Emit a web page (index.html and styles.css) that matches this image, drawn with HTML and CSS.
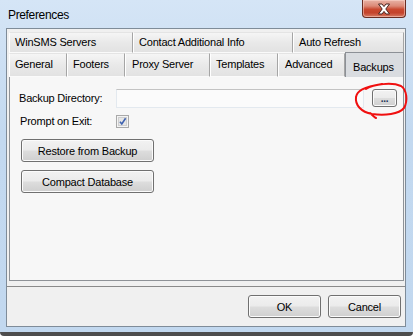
FILE: index.html
```html
<!DOCTYPE html>
<html>
<head>
<meta charset="utf-8">
<title>Preferences</title>
<link rel="stylesheet" href="styles.css">
</head>
<body>
<div class="window">
  <div class="titlebar">
    <span class="title">Preferences</span>
    <div class="close">
      <svg width="14" height="12" viewBox="0 0 14 12">
        <path d="M1.5 1 H5 L7 3.6 L9 1 H12.5 L8.8 6 L12.5 11 H9 L7 8.4 L5 11 H1.5 L5.2 6 Z" fill="#ffffff" stroke="#4a2520" stroke-width="1" stroke-linejoin="round"/>
      </svg>
    </div>
  </div>
  <div class="client">
    <div class="tabarea">
      <div class="tabrow row1">
        <div class="tab">WinSMS Servers</div>
        <div class="tab">Contact Additional Info</div>
        <div class="tab">Auto Refresh</div>
      </div>
      <div class="tabrow row2">
        <div class="tab">General</div>
        <div class="tab">Footers</div>
        <div class="tab">Proxy Server</div>
        <div class="tab">Templates</div>
        <div class="tab">Advanced</div>
        <div class="tab selected">Backups</div>
      </div>
      <div class="panel">
        <div class="field-row">
          <span class="label dir-label">Backup Directory:</span>
          <div class="textbox"></div>
          <button class="btn browse">...</button>
        </div>
        <div class="field-row check-row">
          <span class="label exit-label">Prompt on Exit:</span>
          <svg class="checkbox" width="13" height="13" viewBox="0 0 13 13">
            <rect x="0.5" y="0.5" width="12" height="12" fill="#f4f4f4" stroke="#a9a9a9"/>
            <rect x="2.5" y="2.5" width="8" height="8" fill="#e6e6e6" stroke="#cfcfcf"/>
            <path d="M4 6.8 L5.8 9 L9.6 3.2" fill="none" stroke="#3f62b0" stroke-width="1.6"/>
          </svg>
        </div>
        <button class="btn action first">Restore from Backup</button>
        <button class="btn action">Compact Database</button>
      </div>
    </div>
    <div class="footer">
      <button class="btn dlg">OK</button>
      <button class="btn dlg">Cancel</button>
    </div>
  </div>
  <svg class="annotation" width="413" height="336" viewBox="0 0 413 336">
    <path d="M366 89 C374 84 392 82 401 86 C407 90 408 101 404 108 C399 114 385 116 372 114 C361 112 355 105 356 97 C357 91 363 87 382 84 M370 113 C372 115 374 117 376 118" fill="none" stroke="#f01010" stroke-width="2" stroke-linecap="round"/>
  </svg>
</div>
</body>
</html>
```

FILE: styles.css
```css
* { box-sizing: border-box; }
html, body { margin: 0; padding: 0; }
body {
  width: 413px;
  height: 336px;
  overflow: hidden;
  font-family: "Liberation Sans", Arial, sans-serif;
  font-size: 11px;
  letter-spacing: -0.2px;
  color: #000;
  background: #ffffff;
}
.window {
  position: relative;
  width: 413px;
  height: 336px;
  padding: 0 7px 5px 6px;
  background: linear-gradient(#d5e5f6, #c3d9f0 40%, #c2d8ef);
  border-bottom: 4px solid #4d4d4d;
  border-radius: 0 0 4px 4px;
  display: flex;
  flex-direction: column;
}
.titlebar {
  position: relative;
  height: 28px;
  display: flex;
  align-items: center;
  padding: 2px 0 0 2px;
}
.title {
  font-size: 12px;
  letter-spacing: -0.35px;
  color: #000;
}
.close {
  position: absolute;
  left: 356px;
  top: 0;
  width: 44px;
  height: 18px;
  border: 1px solid #6a2d23;
  border-top: none;
  border-radius: 0 0 4px 4px;
  background: linear-gradient(#e8b2a5 0%, #dc8a78 35%, #c9482f 55%, #c4432c 75%, #d67a63 100%);
  box-shadow: inset 0 0 0 1px rgba(255,220,210,0.5);
  display: flex;
  align-items: center;
  justify-content: center;
}
.client {
  height: 299px;
  border: 1px solid #7f8c99;
  background: #f0f0f0;
  display: flex;
  flex-direction: column;
}
.tabarea {
  padding: 3px 1px 5px 2px;
  border-bottom: 1px solid #8a8a8a;
  display: flex;
  flex-direction: column;
}
.tabrow {
  display: grid;
  position: relative;
}
.row1 {
  height: 21px;
  grid-template-columns: 124px 160px 111px;
}
.row2 {
  height: 23px;
  grid-template-columns: 58px 58px 85px 68px 67px 59px;
  z-index: 2;
}
.tab {
  display: flex;
  align-items: center;
  padding: 0 0 1px 5px;
  white-space: nowrap;
  background: linear-gradient(#f5f5f5, #e9e9e9 50%, #e2e2e2);
  border-top: 1px solid #e4e4e4;
  border-left: 1px solid #ffffff;
  border-right: 1px solid #a5a5a5;
  border-bottom: 1px solid #fafafa;
}
.row2 .tab { padding-bottom: 2px; }
.row2 .tab:nth-child(3) { padding-left: 6px; }
.row2 .tab:nth-child(5) { padding-left: 6px; }
.tab.selected {
  margin-top: -1px;
  height: 25px;
  padding: 4px 0 0 7px;
  background: #d9dce0;
  border: 1px solid #8c9096;
  border-bottom: none;
}
.panel {
  height: 205px;
  background: #f7f7f7;
  border: 1px solid #8e9297;
  padding: 12px 0 0 9px;
  display: flex;
  flex-direction: column;
  align-items: flex-start;
}
.field-row {
  display: flex;
  align-items: flex-start;
}
.label {
  display: block;
  line-height: 13px;
}
.dir-label {
  width: 97px;
  padding-top: 3px;
}
.textbox {
  width: 248px;
  height: 19px;
  background: #fbfbfb;
  border: 1px solid #e3e9ef;
  border-top-color: #c3c3c3;
}
.btn {
  font-family: "Liberation Sans", Arial, sans-serif;
  font-size: 11px;
  letter-spacing: -0.2px;
  color: #000;
  padding: 0;
  border: 1px solid #707070;
  border-radius: 3px;
  background: linear-gradient(#f2f2f2 0%, #ebebeb 48%, #dddddd 52%, #cfcfcf 100%);
  box-shadow: inset 0 0 0 1px #fbfbfb;
}
.browse {
  width: 25px;
  height: 18px;
  margin-left: 8px;
  font-size: 10px;
  font-weight: bold;
  line-height: 10px;
  padding-top: 2px;
  color: #223355;
}
.check-row {
  margin-top: 6px;
  align-items: center;
}
.exit-label {
  width: 96px;
  margin-left: 1px;
  padding-top: 1px;
}
.checkbox { display: block; }
.action {
  width: 133px;
  height: 23px;
  margin-left: 2px;
  margin-top: 8px;
}
.action.first { margin-top: 11px; }
.footer {
  height: 39px;
  display: flex;
  justify-content: flex-end;
  align-items: flex-start;
  gap: 7px;
  padding: 8px 4px 0 0;
}
.dlg {
  width: 73px;
  height: 23px;
}
.annotation {
  position: absolute;
  left: 0;
  top: 0;
  pointer-events: none;
}
```
